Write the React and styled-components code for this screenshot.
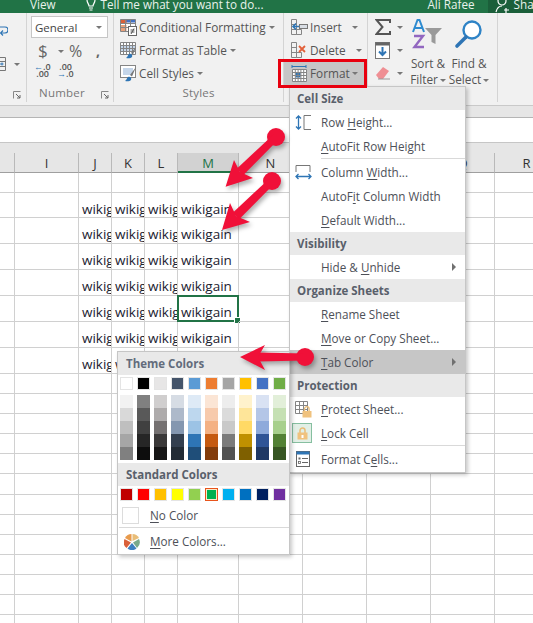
import styled, { createGlobalStyle } from "styled-components";

const FONT = `"Open Sans", "Liberation Sans", sans-serif`;

const GlobalStyle = createGlobalStyle`
  html, body {
    margin: 0;
    padding: 0;
    background: #fff;
  }
  body {
    font-family: ${FONT};
    color: #444;
  }
`;

// ---- page frame ----
const Page = styled.div`
  position: relative;
  width: 533px;
  height: 623px;
  overflow: hidden;
  background: #fff;
  display: flex;
  flex-direction: column;
`;

const TitleBar = styled.div`
  height: 13px;
  flex: none;
  background: #217346;
  color: #e8f2ec;
  display: flex;
  align-items: flex-end;
  font-size: 11.7px;
  line-height: 17px;
  overflow: hidden;
  white-space: nowrap;
`;

const TitleText = styled.span`
  margin-left: ${(p) => p.$left}px;
`;

const ShareBox = styled.div`
  margin-left: 13px;
  flex: 1;
  height: 13px;
  background: #1b5f3a;
  display: flex;
  align-items: flex-end;
  gap: 3px;
  padding-left: 7px;
`;

// ---- ribbon ----
const Ribbon = styled.div`
  height: 92px;
  flex: none;
  display: flex;
  background: #f1f1f1;
  border-bottom: 1px solid #c9c9c9;
  box-sizing: content-box;
`;

const Group = styled.div`
  width: ${(p) => p.$width}px;
  flex: none;
  box-sizing: border-box;
  position: relative;
  padding: 3px 0 2px ${(p) => p.$pad || 0}px;
  margin-bottom: 3px;
  border-right: ${(p) => (p.$plain ? "none" : "1px solid #d4d4d4")};
  display: flex;
  flex-direction: column;
`;

const GroupBody = styled.div`
  flex: 1;
  display: flex;
  flex-direction: ${(p) => p.$dir || "column"};
`;

const GroupLabel = styled.div`
  height: 15px;
  text-align: center;
  font-size: 11.5px;
  line-height: 15px;
  color: #777;
  letter-spacing: 0.2px;
  padding-right: ${(p) => p.$shift || 0}px;
`;

const Launcher = styled.svg`
  position: absolute;
  right: ${(p) => p.$right}px;
  bottom: 3px;
  width: 8px;
  height: 8px;
`;

const StubIcon = styled.div`
  display: flex;
  align-items: center;
  gap: 8px;
  margin-top: ${(p) => p.$top}px;
`;

const Select = styled.div`
  width: 77px;
  height: 22px;
  box-sizing: border-box;
  background: #fff;
  border: 1px solid #c6c6c6;
  display: flex;
  align-items: center;
  justify-content: space-between;
  padding: 0 5px 0 3px;
  font-size: 11.5px;
  color: #444;
`;

const Caret = styled.span`
  display: inline-block;
  width: 0;
  height: 0;
  margin-left: ${(p) => p.$gap || 0}px;
  border-left: 3px solid transparent;
  border-right: 3px solid transparent;
  border-top: 3px solid #777;
  vertical-align: middle;
`;

const NumberRow = styled.div`
  display: flex;
  align-items: center;
  height: 24px;
  margin-top: 1px;
  padding-left: 7px;
  color: #666;
`;

const Symbol = styled.span`
  font-size: ${(p) => p.$size || 16}px;
  width: ${(p) => p.$width}px;
  font-weight: ${(p) => p.$weight || 400};
  line-height: 22px;
`;

const DecimalRow = styled.div`
  display: flex;
  gap: 8px;
  padding-left: 3px;
`;

const Decimal = styled.div`
  font-size: 9px;
  line-height: 7px;
  color: #555;
  font-weight: 600;
  text-align: right;
  width: 15px;
`;

const Blue = styled.span`
  color: #2e75b5;
`;

const RibbonRow = styled.div`
  height: 23px;
  box-sizing: border-box;
  display: flex;
  align-items: center;
  font-size: 11.8px;
  color: #555;
  white-space: nowrap;
  padding-left: ${(p) => p.$pad ?? 6}px;
  padding-bottom: 1px;
  background: ${(p) => (p.$active ? "#c6c6c6" : "transparent")};
`;

const RowIcon = styled.span`
  width: 19px;
  height: 16px;
  flex: none;
  display: flex;
  align-items: center;
`;

const Editing = styled.div`
  width: 36px;
  margin-left: 7px;
  flex: none;
`;

const TallButton = styled.div`
  width: ${(p) => p.$width}px;
  flex: none;
  display: flex;
  flex-direction: column;
  align-items: center;
  font-size: 11.8px;
  line-height: 16px;
  color: #555;
  white-space: nowrap;
  padding-top: 3px;
  text-align: center;
`;

const TallIcon = styled.div`
  height: 32px;
  margin-bottom: 4px;
`;

const Strip = styled.div`
  height: 11px;
  flex: none;
  background: #e6e6e6;
  border-bottom: 1px solid #b5b5b5;
`;

const FormulaBar = styled.div`
  height: 24px;
  flex: none;
  background: #fff;
  border-bottom: 1px solid #c6c6c6;
`;

const HeaderGap = styled.div`
  height: 10px;
  flex: none;
  background: #e6e6e6;
`;

// ---- sheet ----
const Sheet = styled.div`
  flex: 1;
  display: grid;
  grid-template-columns: 15px 64px 33px 33px 33px 61px 64px 64px 64px 64px 64px;
  grid-template-rows: 20px 20px 25px repeat(6, 26px) repeat(13, 20.1px);
  overflow: hidden;
`;

const ColHead = styled.div`
  background: ${(p) => (p.$active ? "#d2d2d2" : "#e6e6e6")};
  color: ${(p) => (p.$active ? "#217346" : "#333")};
  border-right: 1px solid #b9b9b9;
  border-bottom: ${(p) => (p.$active ? "2px solid #217346" : "1px solid #9f9f9f")};
  font-size: 13px;
  line-height: 20px;
  text-align: center;
  box-sizing: border-box;
`;

const Cell = styled.div`
  position: relative;
  box-sizing: border-box;
  border-right: 1px solid #d0d0d0;
  border-bottom: 1px solid #d0d0d0;
  font-size: 13.5px;
  line-height: 17px;
  color: #1c2230;
  white-space: nowrap;
  overflow: ${(p) => (p.$selected ? "visible" : "hidden")};
  padding: 8px 0 0 3px;
`;

const CellCursor = styled.div`
  position: absolute;
  left: -1px;
  top: -1px;
  right: -1px;
  bottom: -1px;
  border: 2px solid #217346;
  &::after {
    content: "";
    position: absolute;
    right: -4px;
    bottom: -4px;
    width: 5px;
    height: 5px;
    background: #217346;
    border: 1px solid #fff;
  }
`;

// ---- dropdown menus ----
const Menu = styled.div`
  position: absolute;
  left: ${(p) => p.$left}px;
  top: ${(p) => p.$top}px;
  width: ${(p) => p.$width}px;
  box-sizing: border-box;
  background: #fff;
  border: 1px solid #c6c6c6;
  box-shadow: 2px 2px 4px rgba(0, 0, 0, 0.22);
  padding-bottom: 1px;
`;

const MenuHeader = styled.div`
  height: 23px;
  background: #e9e9e9;
  font-size: 11.5px;
  font-weight: 700;
  line-height: 23px;
  padding-left: ${(p) => p.$pad || 7}px;
  color: ${(p) => p.$color || "#59606b"};
`;

const MenuItem = styled.div`
  height: 24px;
  display: flex;
  align-items: center;
  position: relative;
  background: ${(p) => (p.$active ? "#c6c6c6" : "transparent")};
  font-size: 11.7px;
  color: #4d5058;
  padding-left: ${(p) => p.$pad || 31}px;
  white-space: nowrap;
  u {
    text-underline-offset: 2px;
  }
`;

const ItemIcon = styled.span`
  position: absolute;
  left: ${(p) => p.$left ?? 4}px;
  top: ${(p) => (p.$boxed ? 2 : 3)}px;
  width: ${(p) => (p.$boxed ? 20 : 19)}px;
  height: ${(p) => (p.$boxed ? 20 : 19)}px;
  display: flex;
  align-items: center;
  justify-content: center;
  box-sizing: border-box;
  border: ${(p) => (p.$boxed ? "1px solid #86bfa0" : "none")};
  background: ${(p) => (p.$boxed ? "#e2efe6" : "transparent")};
`;

const SubArrow = styled.span`
  position: absolute;
  right: 9px;
  top: 8px;
  width: 0;
  height: 0;
  border-top: 4px solid transparent;
  border-bottom: 4px solid transparent;
  border-left: 4px solid #707070;
`;

const MenuSeparator = styled.div`
  height: 2px;
  margin-left: ${(p) => p.$left || 31}px;
  box-sizing: border-box;
  border-top: 1px solid #d9d9d9;
  margin-top: ${(p) => p.$top || 0}px;
`;

const SwatchRow = styled.div`
  display: flex;
  gap: 4px;
  padding: 2px 0 0 2px;
  height: ${(p) => p.$height}px;
  box-sizing: border-box;
`;

const Swatch = styled.div`
  width: 13px;
  height: 13px;
  box-sizing: border-box;
  background: ${(p) => p.$color};
  border: 1px solid ${(p) => (p.$selected ? "#e8541c" : "#e4e4e4")};
  box-shadow: ${(p) => (p.$selected ? "inset 0 0 0 1px #fde9c9" : "none")};
`;

const ShadeRow = styled.div`
  display: flex;
  gap: 4px;
  padding-left: 2px;
  height: 68px;
`;

const ShadeColumn = styled.div`
  width: 13px;
  height: 65px;
  display: flex;
  flex-direction: column;
`;

const Shade = styled.div`
  flex: 1;
  background: ${(p) => p.$color};
`;

const NoColorBox = styled.span`
  position: absolute;
  left: 4px;
  top: 4px;
  width: 15px;
  height: 15px;
  border: 1px solid #dcdcdc;
`;

const Callout = styled.div`
  position: absolute;
  left: 278px;
  top: 59px;
  width: 89px;
  height: 29px;
  box-sizing: border-box;
  border: 3px solid #e8000f;
`;

const ArrowLayer = styled.svg`
  position: absolute;
  inset: 0;
  width: 533px;
  height: 623px;
  pointer-events: none;
  filter: drop-shadow(2px 3px 2px rgba(0, 0, 0, 0.3));
`;

// ---- data ----
const COLUMNS = ["", "I", "J", "K", "L", "M", "N", "O", "P", "Q", "R"];
const THEME = [
  ["#ffffff", "#f2f2f2", "#d9d9d9", "#bfbfbf", "#a6a6a6", "#808080"],
  ["#000000", "#808080", "#595959", "#404040", "#262626", "#0d0d0d"],
  ["#e7e6e6", "#d0cece", "#aeabab", "#757171", "#3a3838", "#171616"],
  ["#44546a", "#d6dce4", "#adb9ca", "#8497b0", "#333f4f", "#222b35"],
  ["#5b9bd5", "#deeaf6", "#bdd7ee", "#9cc3e5", "#2e75b5", "#1f4e79"],
  ["#ed7d31", "#fbe5d5", "#f7caac", "#f4b183", "#c55a11", "#833c0b"],
  ["#a5a5a5", "#ededed", "#dbdbdb", "#c9c9c9", "#7b7b7b", "#525252"],
  ["#ffc000", "#fff2cc", "#fee599", "#ffd965", "#bf9000", "#7f6000"],
  ["#4472c4", "#d9e2f3", "#b4c6e7", "#8eaadb", "#2f5496", "#1f3864"],
  ["#70ad47", "#e2efd9", "#c5e0b3", "#a8d08d", "#538135", "#375623"],
];
const STANDARD = ["#c00000", "#ff0000", "#ffc000", "#ffff00", "#92d050", "#00b050", "#00b0f0", "#0070c0", "#002060", "#7030a0"];

// ---- icons ----
const GridBase = ({ x = 0, y = 0, cols = 3, rows = 3, w = 5, h = 5 }) => {
  const lines = [];
  for (let i = 0; i <= cols; i++) lines.push(`M${x + i * w} ${y}V${y + rows * h}`);
  for (let i = 0; i <= rows; i++) lines.push(`M${x} ${y + i * h}H${x + cols * w}`);
  return <path d={lines.join("")} stroke="#858585" strokeWidth="1" fill="none" />;
};

const WrapStub = () => (
  <svg width="8" height="11" viewBox="0 0 8 11">
    <path d="M0 2h5a2.500 2.500 0 0 1 0 6H1M3 5.500L0.500 8 3 10.500" fill="none" stroke="#2e75b5" strokeWidth="1.2" />
  </svg>
);

const MergeStub = () => (
  <svg width="6" height="14" viewBox="0 0 6 14">
    <path d="M0 0.500h5.500v13H0M0 4.500h5.500M0 9.500h5.500" fill="none" stroke="#777" />
    <path d="M0 7h3.500M2 5.500v3" stroke="#2e75b5" />
  </svg>
);

const CondIcon = () => (
  <svg width="17" height="17" viewBox="0 0 17 17">
    <rect x="0.5" y="0.5" width="15" height="12" fill="#fff" />
    <rect x="0.5" y="0.5" width="15" height="3" fill="#4472c4" />
    <rect x="0.500" y="1" width="6" height="3" fill="#d9603a" />
    <rect x="0.500" y="6" width="6" height="6" fill="#e8a07a" />
    <GridBase x={0.5} y={0.5} cols={3} rows={3} w={5} h={4} />
    <rect x="8.5" y="7.5" width="8" height="9" fill="#fff" stroke="#666" />
    <path d="M10.500 11h4M10.500 13h4M14 9.500l-3 5.500" stroke="#555" fill="none" />
  </svg>
);

const TableIcon = () => (
  <svg width="17" height="17" viewBox="0 0 17 17">
    <rect x="0.5" y="0.5" width="15" height="12" fill="#fff" />
    <rect x="0.5" y="3.5" width="15" height="6" fill="#c5d6ea" />
    <GridBase x={0.5} y={0.5} cols={5} rows={4} w={3} h={3} />
    <path d="M16 5l-5 6 2 1.500z" fill="#777" />
    <path d="M9 12c2-1 4 1 3 3-1 1.500-4 1.500-6 1 2-1 1.500-3 3-4z" fill="#2e75b5" />
  </svg>
);

const StylesIcon = () => (
  <svg width="17" height="17" viewBox="0 0 17 17">
    <rect x="0.5" y="0.5" width="15" height="12" fill="#fff" stroke="#858585" />
    <rect x="3" y="3" width="10" height="7" fill="#c5d6ea" />
    <path d="M16 2l-6 8 2 1.500z" fill="#777" />
    <path d="M8 12c2-1 4 1 3 3-1 1.500-4 1.500-6 1 2-1 1.500-3 3-4z" fill="#2e75b5" />
  </svg>
);

const InsertIcon = () => (
  <svg width="17" height="17" viewBox="0 0 17 17">
    <GridBase x={0.5} y={0.5} cols={1} rows={3} w={5} h={5} />
    <GridBase x={5.5} y={10.5} cols={1} rows={1} w={5} h={5} />
    <rect x="8.5" y="5.5" width="8" height="4" fill="#d8dde4" stroke="#777" />
    <path d="M8 7.500H2M5 4.500L2 7.500l3 3" stroke="#2e75b5" strokeWidth="1.6" fill="none" />
  </svg>
);

const DeleteIcon = () => (
  <svg width="17" height="17" viewBox="0 0 17 17">
    <GridBase x={0.5} y={0.5} cols={1} rows={3} w={5} h={5} />
    <GridBase x={5.5} y={10.5} cols={1} rows={1} w={5} h={5} />
    <path d="M8 4l6 6M14 4l-6 6" stroke="#e2603a" strokeWidth="1.8" />
  </svg>
);

const FormatIcon = () => (
  <svg width="17" height="17" viewBox="0 0 17 17">
    <path d="M1 1.500h14M1 0v3M15 0v3" stroke="#2e75b5" fill="none" />
    <rect x="1.5" y="4.5" width="14" height="12" fill="#fff" />
    <rect x="4.5" y="7.5" width="5" height="5" fill="#2e75b5" />
    <GridBase x={1.5} y={4.5} cols={5} rows={4} w={2.8} h={3} />
  </svg>
);

const SigmaIcon = () => (
  <svg width="16" height="16" viewBox="0 0 16 16">
    <path d="M15 4V1H1.500l6 7-6 7H15v-3" fill="none" stroke="#555" strokeWidth="2" />
  </svg>
);

const FillIcon = () => (
  <svg width="15" height="17" viewBox="0 0 15 17">
    <rect x="0.5" y="0.5" width="14" height="16" fill="#fff" stroke="#777" />
    <rect x="0.5" y="0.5" width="14" height="3" fill="#666" />
    <path d="M7.500 5v8M4 9.500l3.500 3.500L11 9.500" fill="none" stroke="#2e75b5" strokeWidth="2" />
  </svg>
);

const EraserIcon = () => (
  <svg width="17" height="16" viewBox="0 0 17 16">
    <path d="M1 10l7-8 6 4-6 8H4z" fill="#ef8f94" />
    <path d="M3 14h12" stroke="#999" />
  </svg>
);

const SortIcon = () => (
  <svg width="32" height="32" viewBox="0 0 32 32">
    <path d="M1 13L5.500 1h2L12 13M3 9h7" fill="none" stroke="#2e8bd0" strokeWidth="2" />
    <path d="M2 17h9L2.500 28H12" fill="none" stroke="#9267c0" strokeWidth="2.4" />
    <path d="M13 9h17l-6.500 7v9l-4-2v-7z" fill="#9a9a9a" />
  </svg>
);

const FindIcon = () => (
  <svg width="30" height="30" viewBox="0 0 30 30">
    <circle cx="18" cy="11" r="8.5" fill="#fff" stroke="#2e83c6" strokeWidth="2.4" />
    <path d="M12 18L3 27" stroke="#2e75b5" strokeWidth="3.6" strokeLinecap="round" />
  </svg>
);

const RowHeightIcon = () => (
  <svg width="17" height="17" viewBox="0 0 17 17">
    <path d="M3.500 2v13M1 4.500L3.500 2 6 4.500M1 12.500L3.500 15 6 12.500" fill="none" stroke="#2e75b5" strokeWidth="1.3" />
    <path d="M16 1.500H9v14h7" fill="none" stroke="#777" />
  </svg>
);

const ColWidthIcon = () => (
  <svg width="17" height="17" viewBox="0 0 17 17">
    <path d="M1 8V1.500h14V8" fill="none" stroke="#777" />
    <path d="M1 12.500h15M3.500 10L1 12.500 3.500 15M13.500 10L16 12.500 13.500 15" fill="none" stroke="#2e75b5" strokeWidth="1.3" />
  </svg>
);

const Padlock = ({ size = 11 }) => (
  <svg width={size} height={size + 2} viewBox="0 0 11 13">
    <path d="M3 6V3.500a2.500 2.500 0 0 1 5 0V6" fill="none" stroke="#e8bd78" strokeWidth="1.5" />
    <rect x="0.5" y="5.5" width="10" height="7" fill="#f0c27e" />
    <rect x="4.5" y="8" width="2" height="3" fill="#fff" />
  </svg>
);

const ProtectIcon = () => (
  <svg width="17" height="17" viewBox="0 0 17 17">
    <GridBase x={0.5} y={0.5} cols={3} rows={3} w={4} h={4} />
    <g transform="translate(7 5)">
      <path d="M2.500 5V3a2.300 2.300 0 0 1 4.600 0v2" fill="none" stroke="#e8bd78" strokeWidth="1.3" />
      <rect x="0.5" y="5" width="9" height="6.5" fill="#f0c27e" />
    </g>
  </svg>
);

const FormatCellsIcon = () => (
  <svg width="15" height="17" viewBox="0 0 15 17">
    <rect x="0.5" y="0.5" width="13" height="15" fill="#fff" stroke="#666" />
    <rect x="0.5" y="0.5" width="13" height="3" fill="#2e75b5" />
    <path d="M6 7.500h6M6 11.500h6" stroke="#666" />
    <rect x="2.5" y="6.5" width="2" height="2" fill="#666" />
    <rect x="2.5" y="10.5" width="2" height="2" fill="none" stroke="#666" strokeWidth="0.8" />
  </svg>
);

const PieIcon = () => (
  <svg width="16" height="16" viewBox="0 0 16 16">
    <path d="M7.500 7.500L7.500 0A7.500 7.500 0 0 0 1 4z" fill="#e89a4c" />
    <path d="M8.500 7L8.500 0A7.500 7.500 0 0 1 15 4z" fill="#e8bd78" />
    <path d="M9 8.500L15 5A7.500 7.500 0 0 1 13 14z" fill="#79a98a" />
    <path d="M8 9l4.500 5.500A7.500 7.500 0 0 1 3.500 14.500z" fill="#3d7fc0" />
    <path d="M7 8.500L2.500 14A7.500 7.500 0 0 1 0.500 5z" fill="#d9603a" />
  </svg>
);

const PersonIcon = () => (
  <svg width="16" height="13" viewBox="0 0 16 13">
    <circle cx="7" cy="1" r="4" fill="none" stroke="#fff" strokeWidth="1.2" />
    <path d="M1 12c1-4 3-6 6-6M11 8v5M9 10h5" fill="none" stroke="#fff" strokeWidth="1.2" />
  </svg>
);

const BulbSvg = styled.svg`
  margin-left: 30px;
  flex: none;
`;

const BulbIcon = () => (
  <BulbSvg width="10" height="13" viewBox="0 0 10 13">
    <path d="M1 0c0 3 2 4 2 6h4c0-2 2-3 2-6" fill="none" stroke="#fff" strokeWidth="1.2" />
    <path d="M3 8h4M3.500 10h3" stroke="#fff" />
  </BulbSvg>
);

const LauncherIcon = ({ right }) => (
  <Launcher $right={right} viewBox="0 0 8 8">
    <path d="M0.500 7.500V0.500H7.500" fill="none" stroke="#888" />
    <path d="M3 3l4 4M7 4v3H4" fill="none" stroke="#666" />
  </Launcher>
);

const Arrow = ({ dot, head, wingA, wingB, notch, w = 3.6 }) => {
  const dx = notch[0] - dot[0];
  const dy = notch[1] - dot[1];
  const len = Math.hypot(dx, dy);
  const nx = -dy / len;
  const ny = dx / len;
  const shaft = [
    [dot[0] + nx * w, dot[1] + ny * w],
    [notch[0] + nx * (w + 1), notch[1] + ny * (w + 1)],
    [notch[0] - nx * (w + 1), notch[1] - ny * (w + 1)],
    [dot[0] - nx * w, dot[1] - ny * w],
  ];
  return (
    <g fill="#f01038">
      <circle cx={dot[0]} cy={dot[1]} r="9" />
      <polygon points={shaft.map((p) => p.join(",")).join(" ")} />
      <polygon points={[head, wingA, notch, wingB].map((p) => p.join(",")).join(" ")} />
    </g>
  );
};

// text in the last filled row sits mostly behind the colour menu
const cellText = (r, name) => {
  if (r < 1 || r > 7) return "";
  if (r === 7) return name === "J" ? "wikigain" : name === "K" ? "w" : "";
  return ["J", "K", "L", "M"].includes(name) ? "wikigain" : "";
};

function SheetGrid() {
  const cells = [];
  COLUMNS.forEach((name, i) => cells.push(<ColHead key={`h${i}`} $active={name === "M"}>{name}</ColHead>));
  for (let r = 0; r < 21; r++) {
    COLUMNS.forEach((name, i) => {
      const selected = r === 5 && name === "M";
      cells.push(
        <Cell key={`${r}-${i}`} $selected={selected}>
          {cellText(r, name)}
          {selected && <CellCursor />}
        </Cell>
      );
    });
  }
  return <Sheet>{cells}</Sheet>;
}

export default function App() {
  return (
    <Page>
      <GlobalStyle />
      <TitleBar>
        <TitleText $left={30}>View</TitleText>
        <BulbIcon />
        <TitleText $left={5}>Tell me what you want to do...</TitleText>
        <TitleText $left={164}>Ali Rafee</TitleText>
        <ShareBox>
          <PersonIcon />
          <span>Share</span>
        </ShareBox>
      </TitleBar>

      <Ribbon>
        <Group $width={27}>
          <StubIcon $top={9}><WrapStub /></StubIcon>
          <StubIcon $top={21}><MergeStub /><Caret /></StubIcon>
          <LauncherIcon right={5} />
        </Group>

        <Group $width={87} $pad={4}>
          <GroupBody>
            <Select>
              General
              <Caret />
            </Select>
            <NumberRow>
              <Symbol $size={17} $width={20}>$</Symbol>
              <Caret />
              <Symbol $size={16} $width={5} />
              <Symbol $size={16} $width={27}>%</Symbol>
              <Symbol $size={14} $width={10} $weight={700}>,</Symbol>
            </NumberRow>
            <DecimalRow>
              <Decimal><Blue>←</Blue>.0<br />.00</Decimal>
              <Decimal>.00<br /><Blue>→</Blue>.0</Decimal>
            </DecimalRow>
          </GroupBody>
          <GroupLabel $shift={20}>Number</GroupLabel>
          <LauncherIcon right={4} />
        </Group>

        <Group $width={170}>
          <GroupBody>
            <RibbonRow><RowIcon><CondIcon /></RowIcon><span>Conditional Formatting</span><Caret $gap={3} /></RibbonRow>
            <RibbonRow><RowIcon><TableIcon /></RowIcon><span>Format as Table</span><Caret $gap={3} /></RibbonRow>
            <RibbonRow><RowIcon><StylesIcon /></RowIcon><span>Cell Styles</span><Caret $gap={3} /></RibbonRow>
          </GroupBody>
          <GroupLabel>Styles</GroupLabel>
        </Group>

        <Group $width={84}>
          <GroupBody>
            <RibbonRow $pad={7}><RowIcon><InsertIcon /></RowIcon><span>Insert</span><Caret $gap={10} /></RibbonRow>
            <RibbonRow $pad={7}><RowIcon><DeleteIcon /></RowIcon><span>Delete</span><Caret $gap={10} /></RibbonRow>
            <RibbonRow $pad={7} $active><RowIcon><FormatIcon /></RowIcon><span>Format</span><Caret $gap={2} /></RibbonRow>
          </GroupBody>
        </Group>

        <Group $width={130}>
          <GroupBody $dir="row">
            <Editing>
              <RibbonRow $pad={0}><RowIcon><SigmaIcon /></RowIcon><Caret $gap={3} /></RibbonRow>
              <RibbonRow $pad={0}><RowIcon><FillIcon /></RowIcon><Caret $gap={3} /></RibbonRow>
              <RibbonRow $pad={0}><RowIcon><EraserIcon /></RowIcon><Caret $gap={3} /></RibbonRow>
            </Editing>
            <TallButton $width={34}>
              <TallIcon><SortIcon /></TallIcon>
              <span>Sort &amp;</span>
              <span>Filter<Caret $gap={2} /></span>
            </TallButton>
            <TallButton $width={48}>
              <TallIcon><FindIcon /></TallIcon>
              <span>Find &amp;</span>
              <span>Select<Caret $gap={2} /></span>
            </TallButton>
          </GroupBody>
        </Group>
      </Ribbon>

      <Strip />
      <FormulaBar />
      <HeaderGap />
      <SheetGrid />

      <Menu $left={289} $top={86} $width={177}>
        <MenuHeader>Cell Size</MenuHeader>
        <MenuItem><ItemIcon><RowHeightIcon /></ItemIcon><span>Row <u>H</u>eight...</span></MenuItem>
        <MenuItem><span><u>A</u>utoFit Row Height</span></MenuItem>
        <MenuSeparator />
        <MenuItem><ItemIcon><ColWidthIcon /></ItemIcon><span>Column <u>W</u>idth...</span></MenuItem>
        <MenuItem><span>AutoF<u>i</u>t Column Width</span></MenuItem>
        <MenuItem><span><u>D</u>efault Width...</span></MenuItem>
        <MenuHeader>Visibility</MenuHeader>
        <MenuItem><span>Hide &amp; <u>U</u>nhide</span><SubArrow /></MenuItem>
        <MenuHeader>Organize Sheets</MenuHeader>
        <MenuItem><span><u>R</u>ename Sheet</span></MenuItem>
        <MenuItem><span><u>M</u>ove or Copy Sheet...</span></MenuItem>
        <MenuItem $active><span><u>T</u>ab Color</span><SubArrow /></MenuItem>
        <MenuHeader>Protection</MenuHeader>
        <MenuItem><ItemIcon><ProtectIcon /></ItemIcon><span><u>P</u>rotect Sheet...</span></MenuItem>
        <MenuItem><ItemIcon $boxed $left={2}><Padlock /></ItemIcon><span><u>L</u>ock Cell</span></MenuItem>
        <MenuSeparator />
        <MenuItem><ItemIcon><FormatCellsIcon /></ItemIcon><span>Format C<u>e</u>lls...</span></MenuItem>
      </Menu>

      <Menu $left={117} $top={351} $width={173}>
        <MenuHeader $pad={8} $color="#636c7c">Theme Colors</MenuHeader>
        <SwatchRow $height={20}>
          {THEME.map((col) => <Swatch key={col[0]} $color={col[0]} />)}
        </SwatchRow>
        <ShadeRow>
          {THEME.map((col) => (
            <ShadeColumn key={col[0]}>
              {col.slice(1).map((c, i) => <Shade key={i} $color={c} />)}
            </ShadeColumn>
          ))}
        </ShadeRow>
        <MenuHeader $pad={8}>Standard Colors</MenuHeader>
        <SwatchRow $height={17}>
          {STANDARD.map((c) => <Swatch key={c} $color={c} $selected={c === "#00b050"} />)}
        </SwatchRow>
        <MenuItem $pad={32}><NoColorBox /><span><u>N</u>o Color</span></MenuItem>
        <MenuSeparator $left={1} />
        <MenuItem $pad={32}><ItemIcon $left={4}><PieIcon /></ItemIcon><span><u>M</u>ore Colors...</span></MenuItem>
      </Menu>

      <Callout />

      <ArrowLayer viewBox="0 0 533 623">
        <Arrow dot={[276, 137]} head={[225.6, 186.7]} wingA={[234, 160]} wingB={[253, 178]} notch={[240, 172]} />
        <Arrow dot={[272, 181]} head={[222, 230]} wingA={[230, 203]} wingB={[250, 222]} notch={[236, 216]} />
        <Arrow dot={[305, 357]} head={[240, 357]} wingA={[265, 345]} wingB={[265, 370]} notch={[258, 357]} />
      </ArrowLayer>
    </Page>
  );
}
